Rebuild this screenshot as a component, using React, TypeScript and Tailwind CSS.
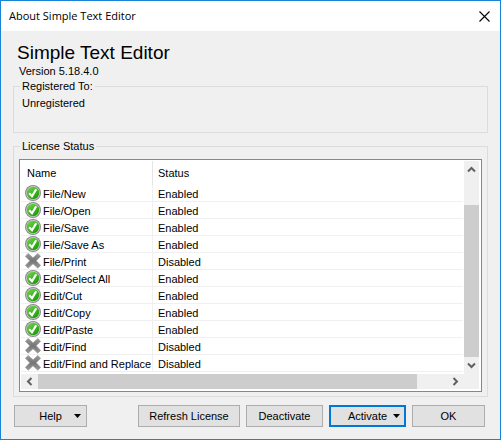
import React from "react";

type Feature = { name: string; enabled: boolean };

const features: Feature[] = [
  { name: "File/New", enabled: true },
  { name: "File/Open", enabled: true },
  { name: "File/Save", enabled: true },
  { name: "File/Save As", enabled: true },
  { name: "File/Print", enabled: false },
  { name: "Edit/Select All", enabled: true },
  { name: "Edit/Cut", enabled: true },
  { name: "Edit/Copy", enabled: true },
  { name: "Edit/Paste", enabled: true },
  { name: "Edit/Find", enabled: false },
  { name: "Edit/Find and Replace", enabled: false },
];

function EnabledIcon() {
  return (
    <svg viewBox="0 0 16 16" className="h-4 w-4 shrink-0" aria-hidden="true">
      <defs>
        <linearGradient id="green" x1="0" y1="0" x2="0.7" y2="1">
          <stop offset="0" stopColor="#7ed65c" />
          <stop offset="0.5" stopColor="#45bb25" />
          <stop offset="1" stopColor="#1f9a0c" />
        </linearGradient>
      </defs>
      <circle cx="8" cy="8" r="8" fill="#8a8a8a" />
      <circle cx="8" cy="8" r="6.9" fill="#cfcfcf" />
      <circle cx="8" cy="8" r="6.2" fill="url(#green)" />
      <path d="M4.2 8.2 L7 11.2 L11.2 4.2" fill="none" stroke="#fff" strokeWidth="2.2" />
    </svg>
  );
}

function DisabledIcon() {
  return (
    <svg viewBox="0 0 16 16" className="h-4 w-4 shrink-0" aria-hidden="true">
      <defs>
        <linearGradient id="gray" x1="0" y1="0" x2="0" y2="1">
          <stop offset="0" stopColor="#9c9c9c" />
          <stop offset="0.5" stopColor="#757575" />
          <stop offset="1" stopColor="#9a9a9a" />
        </linearGradient>
      </defs>
      <path
        d="M3.2 0.5 L8 4.8 L12.8 0.5 L15.6 3.2 L11.2 7.7 L15.6 12.4 L12.8 15.2 L8 10.8 L3.2 15.2 L0.4 12.4 L4.8 7.7 L0.4 3.2 Z"
        fill="url(#gray)"
        stroke="#9b9b9b"
        strokeWidth="0.7"
        strokeLinejoin="round"
      />
    </svg>
  );
}

function Chevron({ d }: { d: string }) {
  return (
    <svg viewBox="0 0 9 9" className="h-[9px] w-[9px]" aria-hidden="true">
      <path d={d} fill="none" stroke="#606060" strokeWidth="2" />
    </svg>
  );
}

function Caret() {
  return (
    <svg viewBox="0 0 7 4" className="h-1 w-[7px] justify-self-end" aria-hidden="true">
      <path d="M0 0 H7 L3.5 4 Z" fill="#000" />
    </svg>
  );
}

const button = "h-[22px] border border-[#adadad] bg-[#e1e1e1] text-center leading-5";

export default function App() {
  return (
    <div className="flex w-full flex-col border border-[#1883d7] bg-[#f0f0f0] font-['Liberation_Sans',Arial,sans-serif] text-[11px] leading-[14px] text-black">
      <header className="flex h-[30px] items-center justify-between bg-white pr-[10px] pl-2">
        <span className="font-['Open_Sans',sans-serif] text-[11px]">About Simple Text Editor</span>
        <button aria-label="Close">
          <svg viewBox="0 0 11 11" className="h-[11px] w-[11px]" aria-hidden="true">
            <path d="M0.5 0.5 L10.5 10.5 M10.5 0.5 L0.5 10.5" stroke="#000" strokeWidth="1.1" />
          </svg>
        </button>
      </header>

      <main className="px-3 pt-[10px] pb-3">
        <h1 className="pl-1 text-[19px] leading-6">Simple Text Editor</h1>
        <p className="pl-[6px] leading-[13px]">Version 5.18.4.0</p>

        <fieldset className="mt-[2px] h-[53px] border border-[#dcdcdc] px-2">
          <legend className="-ml-[2px] px-[2px] leading-[13px]">Registered To:</legend>
          <p className="pt-[3px]">Unregistered</p>
        </fieldset>

        <fieldset className="mt-[7px] border border-[#dcdcdc] px-[5px] pt-[6px] pb-1">
          <legend className="ml-[1px] px-[2px] leading-[13px]">License Status</legend>
          <div className="border border-[#828790] bg-white p-px">
            <div className="flex">
              <div className="min-w-0 flex-1 pr-px pb-[2px]">
                <table className="w-full table-fixed border-separate border-spacing-0 text-left">
                  <thead>
                    <tr className="h-6">
                      <th className="w-[132px] border-r border-[#e5e5e5] p-0 pl-[6px] font-normal">Name</th>
                      <th className="p-0 pl-[5px] font-normal">Status</th>
                    </tr>
                  </thead>
                  <tbody>
                    {features.map((f) => (
                      <tr key={f.name} className="h-[17px]">
                        <td className="border-r border-b border-[#f0f0f0] p-0 pl-1">
                          <div className="flex h-4 items-center gap-[2px] whitespace-nowrap">
                            {f.enabled ? <EnabledIcon /> : <DisabledIcon />}
                            <span className="pt-[2px]">{f.name}</span>
                          </div>
                        </td>
                        <td className="border-b border-[#f0f0f0] p-0 pt-[2px] pl-[5px]">
                          {f.enabled ? "Enabled" : "Disabled"}
                        </td>
                      </tr>
                    ))}
                  </tbody>
                </table>
              </div>
              {/* vertical scrollbar */}
              <div className="mr-px flex w-[15px] flex-col bg-[#f0f0f0]">
                <button aria-label="Scroll up" className="flex h-[17px] items-center justify-center">
                  <Chevron d="M1 6.5 L4.5 3 L8 6.5" />
                </button>
                <div className="flex-[27]" />
                <div className="flex-[151] bg-[#cdcdcd]" />
                <button aria-label="Scroll down" className="flex h-[17px] items-center justify-center">
                  <Chevron d="M1 2.5 L4.5 6 L8 2.5" />
                </button>
              </div>
            </div>
            {/* horizontal scrollbar */}
            <div className="mr-px mb-px flex h-[15px] bg-[#f0f0f0]">
              <button aria-label="Scroll left" className="flex w-[17px] items-center justify-center">
                <Chevron d="M6.5 1 L3 4.5 L6.5 8" />
              </button>
              <div className="flex-[379] bg-[#cdcdcd]" />
              <div className="flex-[30]" />
              <button aria-label="Scroll right" className="mr-[15px] flex w-[17px] items-center justify-center">
                <Chevron d="M2.5 1 L6 4.5 L2.5 8" />
              </button>
            </div>
          </div>
        </fieldset>

        <div className="mt-2 flex gap-[6px] pr-[3px] pl-[1px]">
          <button className="mr-auto grid h-[22px] w-[73px] grid-cols-[1fr_auto_1fr] items-center border border-[#adadad] bg-[#e1e1e1] px-[5px]">
            <span className="col-start-2">Help</span>
            <Caret />
          </button>
          <button className={`${button} w-[102px]`}>Refresh License</button>
          <button className={`${button} w-[77px]`}>Deactivate</button>
          <button className="grid h-[22px] w-[77px] grid-cols-[1fr_auto_1fr] items-center border-2 border-[#0078d7] bg-[#e1e1e1] px-1">
            <span className="col-start-2">Activate</span>
            <Caret />
          </button>
          <button className={`${button} w-[73px]`}>OK</button>
        </div>
      </main>
    </div>
  );
}
